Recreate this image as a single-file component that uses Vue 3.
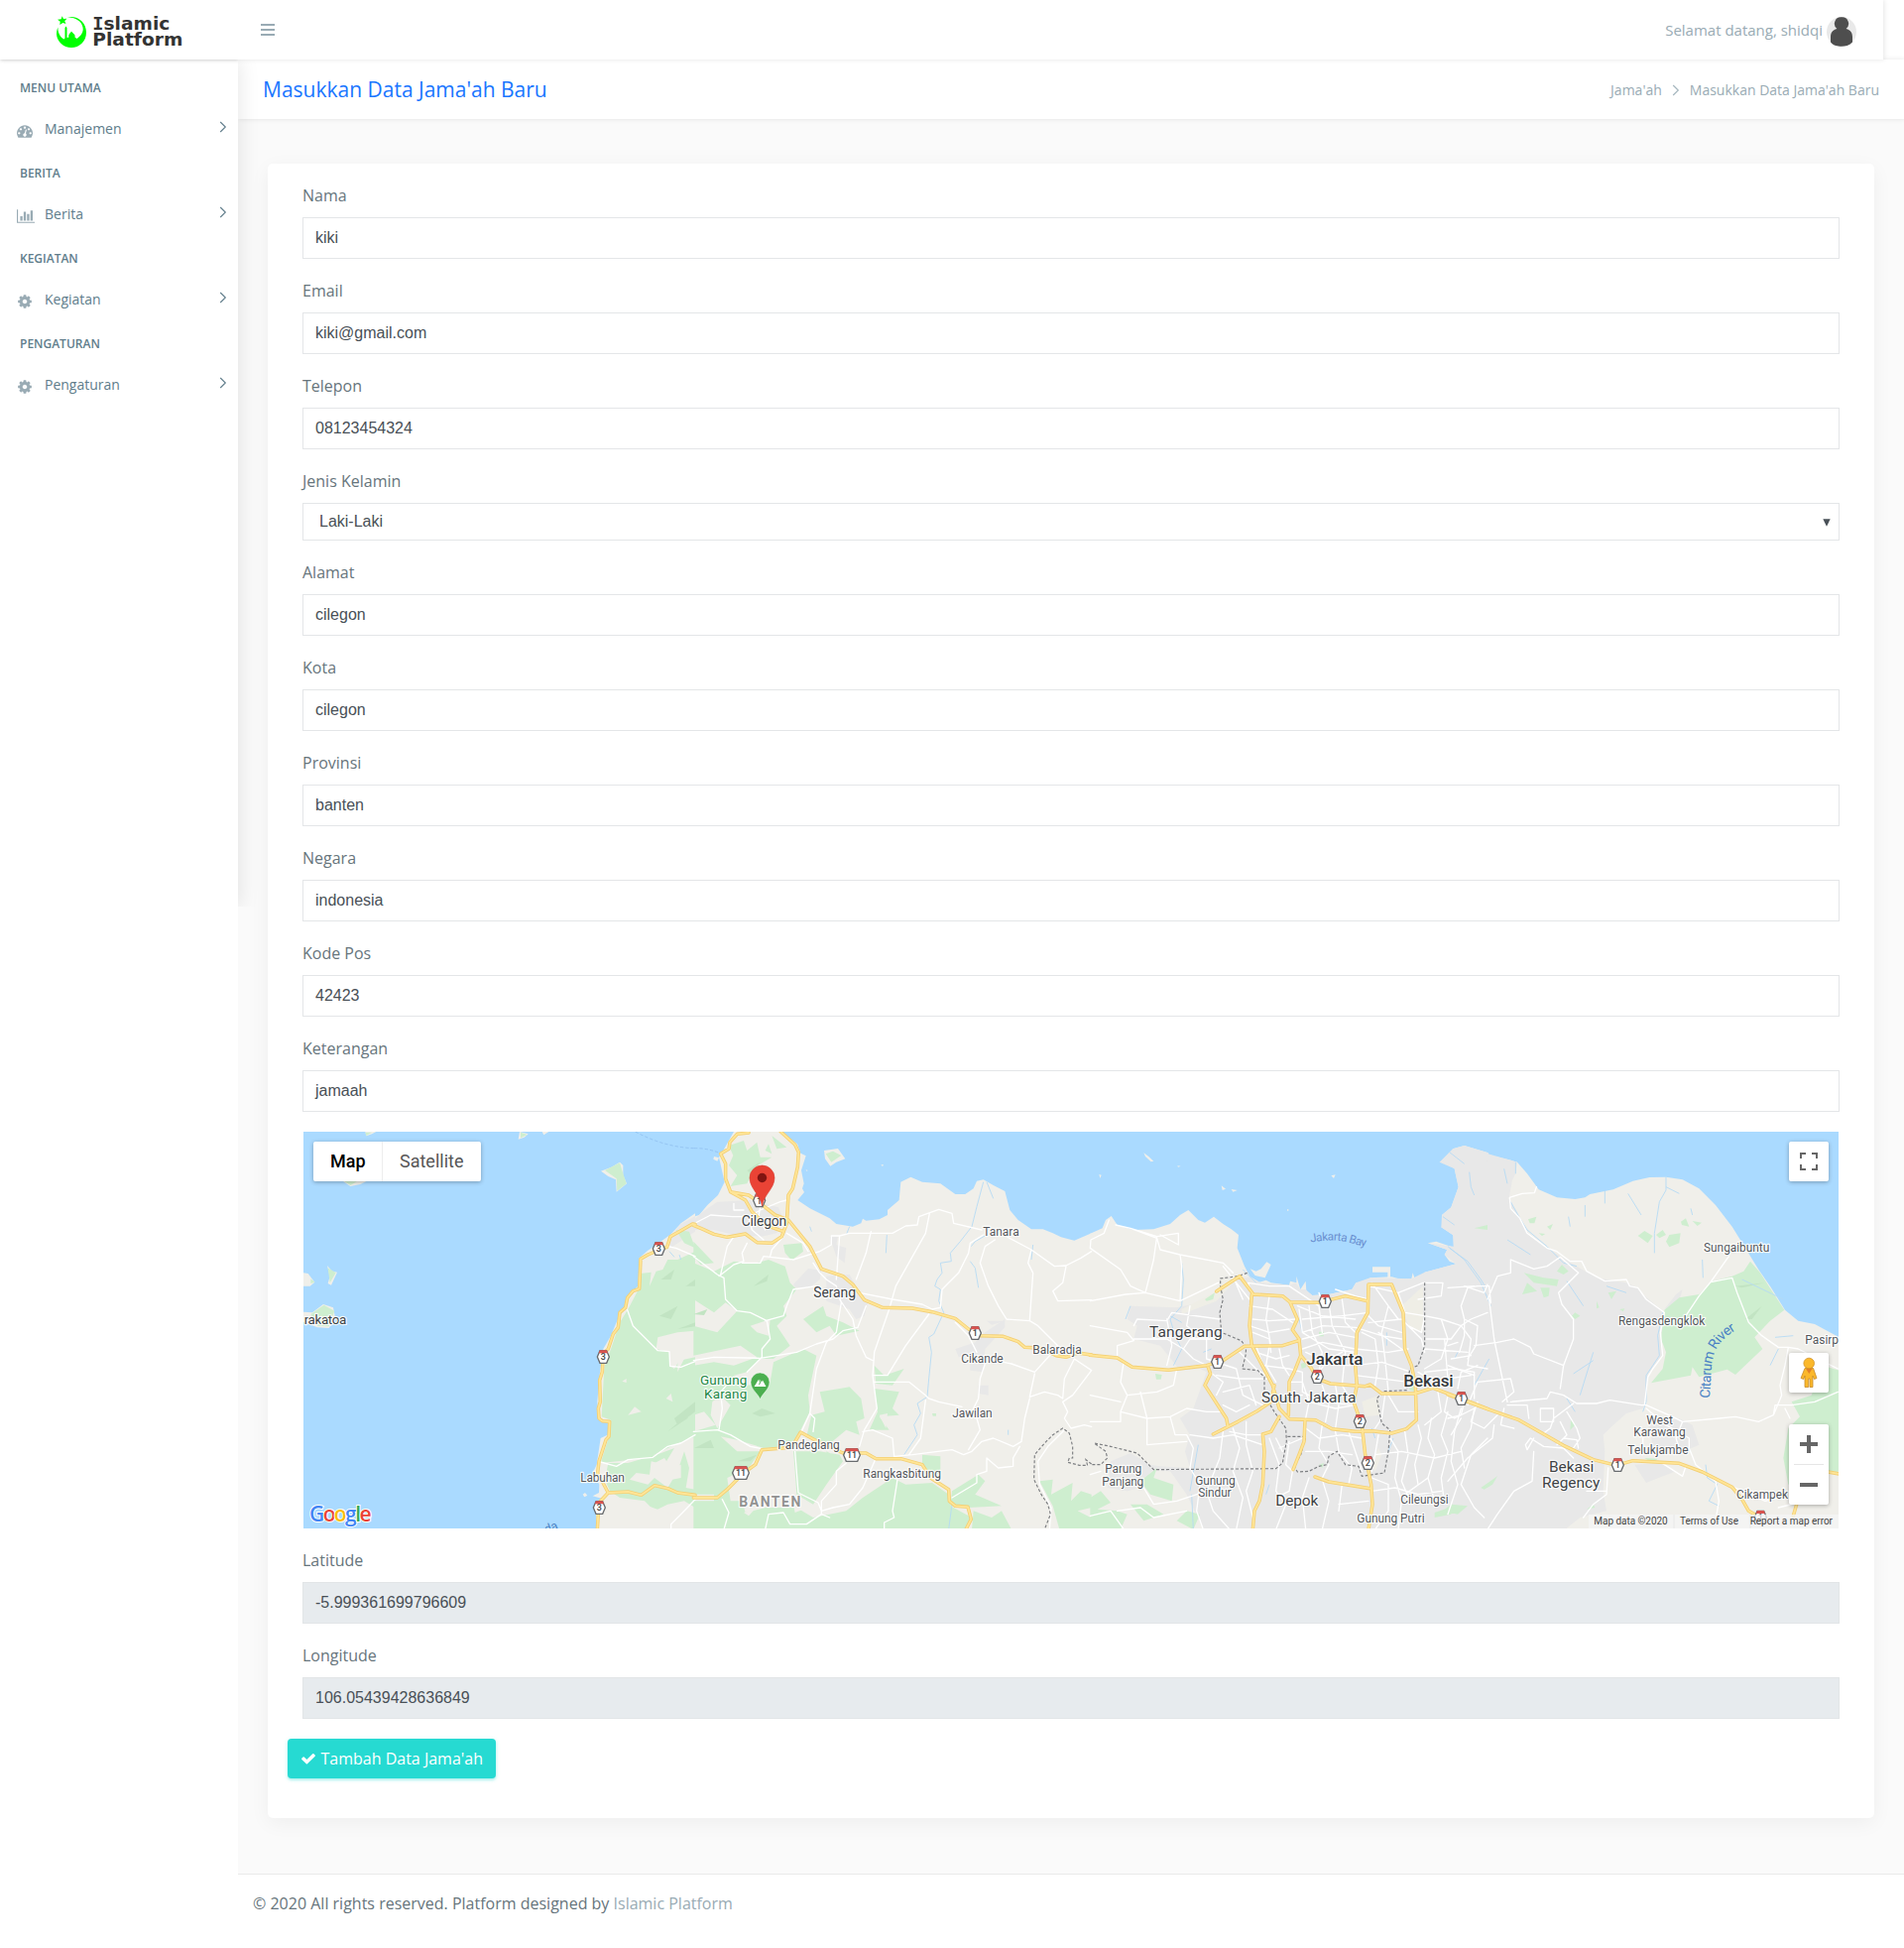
<script setup>
const menu = [
  { title: 'MENU UTAMA', label: 'Manajemen', icon: 'gauge' },
  { title: 'BERITA', label: 'Berita', icon: 'chart' },
  { title: 'KEGIATAN', label: 'Kegiatan', icon: 'cog' },
  { title: 'PENGATURAN', label: 'Pengaturan', icon: 'cog' },
]

const icons = {
  gauge: { w: 1792, d: 'M384 1152q0-53-37.5-90.5t-90.5-37.5-90.5 37.5-37.5 90.5 37.5 90.5 90.5 37.5 90.5-37.5 37.5-90.5zm192-448q0-53-37.5-90.5t-90.5-37.5-90.5 37.5-37.5 90.5 37.5 90.5 90.5 37.5 90.5-37.5 37.5-90.5zm428 481l101-382q6-26-7.5-48.5t-38.5-29.5-48 6.5-30 39.5l-101 382q-60 5-107 43.5t-63 98.5q-20 77 20 146t117 89 146-20 89-117q16-60-6-117t-72-91zm660-33q0-53-37.5-90.5t-90.5-37.5-90.5 37.5-37.5 90.5 37.5 90.5 90.5 37.5 90.5-37.5 37.5-90.5zm-640-640q0-53-37.5-90.5t-90.5-37.5-90.5 37.5-37.5 90.5 37.5 90.5 90.5 37.5 90.5-37.5 37.5-90.5zm448 192q0-53-37.5-90.5t-90.5-37.5-90.5 37.5-37.5 90.5 37.5 90.5 90.5 37.5 90.5-37.5 37.5-90.5zm320 448q0 261-141 483-19 29-54 29h-1402q-35 0-54-29-141-221-141-483 0-182 71-348t191-286 286-191 348-71 348 71 286 191 191 286 71 348z' },
  chart: { w: 2048, d: 'M640 896v512h-256v-512h256zm384-512v1024h-256v-1024h256zm1024 1152v128h-2048v-1536h128v1408h1920zm-640-896v768h-256v-768h256zm384-384v1152h-256v-1152h256z' },
  cog: { w: 1792, d: 'M1152 896q0-106-75-181t-181-75-181 75-75 181 75 181 181 75 181-75 75-181zm512-109v222q0 12-8 23t-20 13l-185 28q-19 54-39 91 35 50 107 138 10 12 10 25t-9 23q-27 37-99 108t-94 71q-12 0-26-9l-138-108q-44 23-91 38-16 136-29 186-7 28-36 28h-222q-14 0-24.5-8.5t-11.5-21.5l-28-184q-49-16-90-37l-141 107q-10 9-25 9-14 0-25-11-126-114-165-168-7-10-7-23 0-12 8-23 15-21 51-66.5t54-70.5q-27-50-41-99l-183-27q-13-2-21-12.5t-8-23.5v-222q0-12 8-23t19-13l186-28q14-46 39-92-40-57-107-138-10-12-10-24 0-10 9-23 26-36 98.5-107.5t94.5-71.5q13 0 26 10l138 107q44-23 91-38 16-136 29-186 7-28 36-28h222q14 0 24.5 8.5t11.5 21.5l28 184q49 16 90 37l142-107q9-9 24-9 13 0 25 10 129 119 165 170 7 8 7 22 0 12-8 23-15 21-51 66.5t-54 70.5q26 50 41 98l183 28q13 2 21 12.5t8 23.5z' },
}

const fields = [
  { label: 'Nama', value: 'kiki' },
  { label: 'Email', value: 'kiki@gmail.com' },
  { label: 'Telepon', value: '08123454324' },
  { label: 'Jenis Kelamin', value: 'Laki-Laki', select: true },
  { label: 'Alamat', value: 'cilegon' },
  { label: 'Kota', value: 'cilegon' },
  { label: 'Provinsi', value: 'banten' },
  { label: 'Negara', value: 'indonesia' },
  { label: 'Kode Pos', value: '42423' },
  { label: 'Keterangan', value: 'jamaah' },
]
const coords = [
  { label: 'Latitude', value: '-5.999361699796609' },
  { label: 'Longitude', value: '106.05439428636849' },
]

// The map is drawn in four tiles; every tile uses units of a third of a pixel.
const W = 300, B = 700, J = 1100, E = 1460
const layers = [
  { name: 'land', paths: [
    [W, 'M1203 280L1160 310 1130 343 1095 368 1060 392 1034 415 1030 500 1000 528 988 570 968 602 948 650 925 690 915 760 907 850 912 905 942 915 938 950 917 960 905 1040 893 1065 913 1100 912 1125 893 1135 920 1142 903 1160 903 1236H1203ZM205 33L238 33 225 40 208 46ZM672 33L698 40 686 50 668 56ZM740 33H760L745 43ZM137 182L160 198 190 192 210 182ZM918 152L950 140 975 125 985 135 985 165 996 190 965 215 963 178 940 168ZM90 438L105 455 120 458 102 497 92 492 98 470ZM18 460L32 462 52 488 38 500 18 500ZM18 578L45 580 78 555 108 565 115 600 95 627 60 625 18 608ZM863 1130L870 1125 877 1133 868 1138Z'],
    [B, 'M-2 290L15 285 40 255 72 225 92 185 75 110 88 90 120 33H262L312 70 322 98 338 106 324 150 332 190 327 205 333 216 313 240 350 265 410 295 430 312 480 320 505 310 510 296 520 302 560 298 585 285 585 270 620 240 625 185 655 170 690 185 745 190 790 222 820 222 845 205 855 182 875 178 905 195 940 213 955 270 980 300 1020 328 1055 328 1085 340 1110 352 1150 362 1202 340V1236H-2ZM393 90L435 84 457 115 430 125 412 137 396 115ZM60 108L75 112 70 122 58 116ZM565 133L573 133 570 138ZM338 148L344 150 340 152Z'],
    [J, 'M-2 341L35 325 45 300 62 288 80 315 130 330 190 328 240 312 270 285 295 270 325 300 345 308 372 290 400 312 425 328 447 345 443 385 465 440 482 472 510 488 530 482 545 490 600 497 603 485 622 490 622 470 634 510 650 485 652 515 670 528 720 525 790 510 802 490 830 495 845 475 910 472 940 480 970 478 974 460 980 478 1005 475 1010 458 1060 445 1105 433 1085 425 1070 405 1078 390 1020 370 1045 365 1097 383 1108 362 1095 345 1060 322 1070 310 1062 285 1090 262 1112 200 1100 145 1080 130 1055 125 1092 100 1095 85 1130 75 1202 97V1236H-2ZM482 448L500 455 515 448 532 427 545 435 527 475 497 468ZM852 442H906V474H898V458H852ZM160 97L175 108 190 122 182 124 165 108ZM262 136L272 137 264 140ZM25 162L32 164 28 174ZM395 196L408 206 398 210ZM425 207L443 210 430 215ZM727 166L740 163 735 174ZM594 268H598V272H594Z'],
    [E, 'M118 99L140 107 185 118 210 125 240 160 275 208 330 232 385 237 415 232 430 222 500 208 560 182 610 171 660 170 710 178 760 205 810 255 860 320 900 385 940 450 975 500 1020 572 1060 605 1110 615 1184 655V1236H118Z'],
  ] },
  { name: 'urban', paths: [
    [W, 'M1203 288L1160 312 1130 345 1120 375 1135 380 1203 335ZM65 585L78 572 75 588Z'],
    [B, 'M-2 300L30 272 70 245 170 240 255 262 270 300 250 340 205 350 120 345 60 330-2 330ZM300 495L345 447 385 452 380 480 350 505 305 505ZM410 350L435 350 430 375 460 385 455 430 430 410ZM400 470L470 465 490 500 525 550 515 590 490 600 470 570 400 545ZM790 690L850 670 880 640 940 600 940 625 880 690 875 760 835 755 835 710 800 715ZM885 605L940 605 900 617ZM860 800L890 800 890 830 860 825Z'],
    [J, 'M390 480L445 478 482 472 510 488 600 497 620 490 634 510 650 510 670 528 720 525 790 510 802 490 845 475 970 478 1010 458 1105 433 1070 405 1078 390 1020 370 1097 380 1095 345 1060 322 1062 285 1090 262 1112 200 1100 145 1055 125 1095 85 1130 75 1202 97V1236H340L290 1130 240 1060 190 1055 175 1070 150 1110 110 1120 50 1110 60 1030 120 1005 180 1040 210 1045 300 1050 285 1000 300 950 270 900 310 870 350 760 330 750 270 755 210 680 130 660 140 620 110 600 120 560 260 565 385 540Z'],
    [E, 'M118 99L185 118 210 125 205 160 195 180 185 235 220 295 250 350 300 385 390 440 450 475 540 490 575 505 590 525 650 575 645 650 650 710 605 765 600 850 590 870 540 885 490 930 470 950 475 1000 470 1120 480 1180 400 1200 355 1236H118ZM565 1040L640 1035 690 1060 600 1095ZM610 920L700 900 740 920 760 980 690 1010 620 990ZM690 525L710 510 700 545 655 570Z'],
  ] },
  { name: 'field-land', paths: [
    [J, 'M395 478L440 480 380 545 275 585 275 570 380 515ZM940 560L1005 500 1005 640 965 630ZM820 850L870 830 875 890 830 895ZM845 1035L870 990 880 1010 860 1060Z'],
    [B, 'M60 940L110 945 80 985 150 1010 90 1030Z'],
  ] },
  { name: 'green', paths: [
    [W, 'M1036 462L1070 458 1065 500 1085 455 1105 450 1120 420 1150 420 1203 395V635L1150 640 1090 655 1085 690 1125 700 1125 740 1140 750 1155 725 1203 715V955L1140 980 1060 1020 917 1035 940 962 948 905 920 895 928 745 950 685 975 610 1000 570 1030 512ZM1145 330L1185 335 1203 385 1170 370ZM940 1035L1000 1035 1100 1005 1140 990 1110 1040 1070 1030 1065 1070 1025 1065 1005 1085 1060 1100 1080 1080 1120 1110 1150 1060 1170 1000 1185 1050 1175 1110 1203 1115V1170L1170 1150 1120 1160 1080 1180 1050 1150 975 1140 945 1120 930 1085ZM140 182L180 184 160 195ZM930 150L975 127 985 160 995 190 967 212 965 175ZM92 445L116 460 98 490ZM205 35H225L208 45ZM675 35L695 42 675 52ZM40 585L80 557 112 575 95 622 60 620ZM40 478L52 488 40 492Z'],
    [B, 'M105 75L150 60 160 90 190 65 200 110 235 110 185 140 160 190 110 198 130 165 105 135 118 105ZM225 70L235 100 215 90ZM235 45L280 80 250 85ZM398 100L420 92 445 105 415 125ZM270 375L325 370 330 395 295 422 275 400ZM-2 365L60 430 20 435-2 410ZM-2 430L60 455 120 425 180 432 225 420 275 440 290 490 310 510 270 560 280 590 250 620 290 680 240 720 200 720 160 760 120 770 160 800 230 790 240 730 330 690 370 710 345 830 350 880 320 940 290 985 210 990 130 965 80 955 130 1000 200 1000 165 1050 100 1080 60 1130-2 1130V940L65 920 30 880-2 890V740L60 730 120 740 190 715 140 680-2 710V620L70 640 130 575 95 550 60 580-2 540ZM380 820L440 810 470 805 505 840 515 900 490 910 500 950 460 935 400 985 340 955 355 890 395 880ZM300 1000L380 1000 440 1010 450 1030 400 1100 360 1160 310 1130 305 1060ZM545 740L575 770 635 750 600 800 550 795ZM545 810L620 820 600 870 620 890 560 895 590 935 530 935 555 880ZM60 1090L100 1080 110 1150 145 1150 155 1185 215 1170 310 1170 360 1200 460 1180 510 1140 600 1080 640 1100 720 1095 770 1130 775 1165 840 1200 820 1236H180L100 1236-2 1236V1150L60 1150ZM690 1010L745 1015 745 1065 710 1080 690 1045ZM780 1120L860 1070 880 1090 850 1130 930 1165 830 1170 775 1165ZM845 1180L900 1200 930 1180 960 1236H840ZM1045 1090L1085 1085 1080 1130 1145 1095 1140 1150 1170 1120 1202 1130V1170L1160 1180 1200 1200V1236H1105L1085 1165ZM330 600L390 560 400 590 450 610 500 635 430 650 410 620 370 640ZM720 885H732V893H722ZM400 1000L440 1020 405 1035Z'],
    [J, 'M-2 1140L30 1120 60 1155 20 1175 80 1180 110 1190 90 1236H-2ZM150 1090L200 1050 190 1080 250 1100 245 1150 180 1130ZM120 1160L170 1160 220 1190 160 1210ZM290 1180L330 1190 310 1236 260 1210ZM345 540L375 520 370 540 350 545ZM690 638H704V652H690ZM635 735L650 730 652 745 638 750ZM195 765L215 768 212 782 198 782ZM960 800L985 800 985 820 965 815ZM690 1040L705 1035 700 1050ZM1040 1185L1100 1165 1090 1190 1040 1200ZM1160 325L1200 315V330ZM1065 1180L1090 1160 1140 1165 1110 1190Z'],
    [E, 'M655 572L700 535 760 525 800 485 860 470 895 455 915 425 945 460 1018 572 975 605 928 655 952 690 870 768 845 752 760 775 740 745 735 770 615 793 650 750 660 700 645 660ZM1134 740L1184 755V1060L1030 1100 1015 1020 1030 930 1065 895 1040 850 1100 830ZM243 298L268 290 262 310 248 310ZM300 320L318 312 310 330ZM275 340L295 342 285 348ZM575 348L595 333 620 348 605 370ZM630 345L650 330 660 345 640 355ZM670 345L704 340 700 370 670 382 660 365ZM705 305L720 295 730 320 708 315ZM740 303L768 308 755 318ZM230 460L290 475 335 480 330 500 260 490ZM240 490L270 515 225 525ZM280 505L308 505 305 530 290 535ZM330 455L345 435 365 455 350 465ZM485 520L510 515 495 540ZM450 545L458 565 450 568ZM375 590L385 580 400 590 385 600ZM520 570L535 568 530 577ZM100 1110L150 1075 135 1100 110 1115ZM420 1175L440 1160 445 1170ZM372 905L385 920 370 935ZM595 1020L635 1022 620 1035Z'],
  ] },
  { name: 'relief', paths: [
    [W, 'M1175 500L1203 480V500ZM1150 630L1203 610V622ZM1140 900L1203 850V880L1150 920ZM1095 590L1150 560 1130 600ZM1120 940L1190 880 1180 900ZM1100 480L1140 450 1130 480Z'],
    [B, 'M160 150L200 125 170 160ZM180 500L225 465 220 485ZM-2 585L40 570 30 588ZM175 885L205 870 245 885 200 895ZM0 990L50 965 60 990ZM130 1030L190 1010 170 1030Z'],
    [E, 'M870 500L960 490 890 505ZM900 600L950 560 920 600Z'],
  ] },
  { name: 'bare', paths: [
    [W, 'M1070 1040L1110 1020 1130 1050 1160 1040 1160 1080 1110 1090ZM1000 890L1020 865 1040 880ZM982 788L995 780 995 792ZM1115 840L1130 825 1135 850ZM1150 700L1185 690 1150 760ZM925 1142L1010 1150 1060 1165 1130 1190 1125 1236H915Z'],
    [B, 'M55 850L80 830 110 860 70 930 50 890ZM170 620L230 600 225 650 190 640ZM150 1185L180 1178 165 1195ZM300 1160L330 1150 330 1175 305 1185ZM560 890L585 885 580 930Z'],
  ] },
  { name: 'stream', paths: [
    [W, 'M1125 395L1140 412M1155 405L1160 420'],
    [B, 'M350 320L355 335M470 320L460 345M583 345L580 400M875 185L855 260 840 320 805 365 775 400 778 425 745 430 750 460 735 480 728 500 745 510 740 545 755 580 725 645 710 655 718 700 710 780 705 835 675 855 685 885 665 920 675 950 655 980 635 1010M885 345L850 365 838 380M835 425L850 445 860 505M1025 375L1020 420M885 185L905 235M950 935V950M780 1160L770 1236'],
    [J, 'M275 430L280 480 275 560 240 600 255 650 275 690 250 740M340 700L365 690M240 590L275 610M460 450L500 490M630 600L640 640M1085 385L1140 425 1180 480 1195 505M1085 95L1130 130M1145 155L1150 200 1160 225M1065 290L1100 315M1110 700L1100 720M300 1120L325 980M305 1130L310 1236M540 1100L530 1130M120 560L105 600M895 640V680M850 930L860 960M915 960L900 1000'],
    [E, 'M0 380L50 420 100 490 130 560M205 125V160M170 145L180 190M475 210V250M545 220L585 285M660 170V210L640 245 625 340 625 400M660 200L700 220M190 245L215 290 240 330 300 380 350 430 390 440M365 290L370 320M415 255V290M735 265L740 285M770 420L772 475M480 500L540 520M360 485L410 560M180 360L250 405M440 700L400 830M380 765L440 725M650 580L635 650 640 710 620 740 600 770 600 850 590 880M1000 690L975 740M990 655L1045 650M780 1040L785 1080 815 1100 790 1150 820 1165M80 800L125 720M890 480L1015 540M360 840L385 880'],
  ] },
  { name: 'minor', paths: [
    [W, 'M998 572L1015 620 1075 680 1090 695 1125 698 1127 742 1160 745 1203 728M917 1032L965 1045 1000 1025 1075 1018 1120 985 1160 975 1203 950M1120 380L1145 385 1203 410M1203 1145L1165 1185 1130 1220V1236'],
    [B, 'M-2 312L50 285 115 290 165 290 200 270 260 245 280 240M120 250V270H150M200 260L195 290 215 330M280 340L330 370 345 395M165 290L175 330 210 360M-2 410L70 465 90 475 95 540 130 575 170 580 220 605 230 660 205 690 205 715 160 760M80 465L100 380 120 350M160 370L145 400 150 425 120 435 75 470M145 430L200 430 210 410 300 420 380 395 415 375 415 348 440 348 430 480M270 350L235 390 230 410M440 348L470 340 600 340 640 318 675 315 680 290 740 268 780 280 785 310 870 330M535 335L520 400 490 480M712 280L700 340 610 500 590 570 545 700 540 770 553 870 515 935 500 985M360 430L380 460 400 480 430 500M370 500L300 510 280 560 270 590 215 605M-2 725L60 715 200 718 310 700 370 675 420 660 450 635 495 625 520 560M430 500L445 550 430 640 400 670 370 750 350 885 325 940M350 885L365 900 360 940M440 540L480 600 490 650 520 715 540 725M500 520L600 540 690 555 720 570 745 565 750 510 800 460 830 400 835 370 875 345M910 360L880 380 865 430 890 500 920 560 945 600 1015 605 1040 620 1100 680M945 350L1020 390 1090 440 1125 438 1170 415 1202 395M1020 390L1010 430 1025 460 1015 605M1125 440L1115 490 1085 515 1100 545 1202 542M790 610L830 650 855 700M850 730L890 720 960 735 1030 760 1080 705M880 735L865 780 860 840 835 890M1030 765L1015 835 1060 820 1100 830 1115 840 1120 780 1150 720 1202 755M1015 840L1000 900 990 970 965 985 905 960 870 970 840 1000 815 1010 780 995 660 1010 605 1015 600 960 540 935 510 940M855 900L865 935 830 995M540 770L585 770 640 680 710 585M545 790H650L700 830 710 840 740 850 810 865M700 845L685 960 650 1010M605 1020L550 1020 510 1110 470 1160 420 1170 385 1180 375 1155 315 1125 305 1000M460 1035L430 1060 430 1100 385 1150 385 1190 410 1200M385 1190L340 1220 290 1220 270 1185 225 1190 215 1236M615 1085L600 1180 605 1200 575 1215V1236M-2 940L70 935 110 950 170 985 205 992M75 935L85 870 80 820 120 775M85 1145L105 1185 90 1236M780 1140L855 1095 855 1070 885 1060 885 1020 920 1050 965 1045 965 1020 985 985M1202 755L1145 830 1115 850 1130 880 1120 900 1140 930 1180 920 1202 925M1120 935L1070 985 1040 1030 1045 1100 1080 1170 1075 1236'],
    [J, 'M-2 385L0 360 40 340 55 300M75 315L120 325 200 350 265 340 265 375 210 345M200 350L190 420 165 520 120 500 90 450-2 385M120 325L200 355 210 390 270 405 400 430 430 460M165 520L105 525-2 545M165 520L270 545 385 490M270 405L275 440 270 545M130 620L140 600 230 605 245 580 390 600M-2 620L110 640 130 665 80 680 80 710M130 660L230 660 280 690 300 660 390 660M230 600L245 680 230 740M280 690L310 720 350 740M100 725L90 790 110 830 90 880 90 910-2 910M90 880L170 900 240 895 290 870 350 880 400 880M110 830L200 820 250 800 260 750M170 900V980L290 970M240 895L255 950 290 950M150 820L170 900M-2 830L90 850M400 440L480 540M430 470L460 540M300 560L290 620 330 650M350 660V720L440 750 460 830 520 860M380 770L450 780 540 780M400 820L480 800 500 860M290 950L310 990 300 1050 330 1100 320 1180 340 1236M400 940L390 1020 350 1120 370 1180 420 1236M430 930L450 990 430 1060 460 1140 440 1236M470 910V980L490 1060 470 1120 490 1200M540 960L570 1040 560 1120 590 1160 560 1236M300 950L370 960 430 950 520 980M-2 1070L30 1060M160 1110L190 1160 260 1150 350 1120M80 1180L150 1170 190 1200 290 1180M-2 1195L60 1180 100 1236'],
    [J, 'M490 530L475 490 540 500 600 500 690 560M480 560L550 570 610 610M490 600L540 605 620 600M540 530L530 600 545 680M500 680L520 740 600 750M630 570L640 640 720 690 800 700M625 560L700 590 800 600M640 600L760 590 840 580M660 560L670 640 700 700 690 760M690 560L700 640M720 550L730 620 770 700 760 800M760 540L770 610 800 640M640 640L700 620 800 625 880 650 940 660M640 660L720 640 800 655M640 690L700 670 800 690M650 700L740 740 800 740M690 760L720 720 760 700M600 750L640 760 640 820 700 850M600 790H640L660 850 650 900M620 750L600 800M700 800L720 860 710 910M740 800L750 860 740 930M700 850L800 860M660 850L740 870 800 860M760 800L790 850M540 680L530 740 560 790M450 700L500 750 530 770M570 690L580 740 600 770M840 590L870 620 940 640M840 610L940 600M850 490L900 560 930 600M820 640L860 660 870 740 860 800M800 690L900 700 960 690M800 740L880 730 970 760M800 770L960 790M900 560L880 640 890 720 900 820M740 510L800 530 840 540M690 520L700 550M840 500L930 520 1005 490M930 520L950 580 1010 590M940 600L1000 660 1010 700M870 640L940 690M960 620L1000 640 1010 590M1005 490L1065 490 1060 530 990 540M1010 590L1060 600 1080 660 1060 720 1010 750M1200 495L1190 520 1130 500M1060 600L1120 620 1150 600 1200 580M1010 660L1090 660 1120 620 1150 660 1140 740 1200 750M1010 690L1140 700M1070 660L1080 780 1150 770M1010 760L1100 750 1160 760 1160 840M1050 820L1060 880 1010 920M1080 830L1070 880 1100 900 1160 870M990 760L1040 790'],
    [J, 'M650 930L690 960 760 950 820 960M700 920L690 990 720 1040 700 1080M740 940L750 1000 790 1050 780 1100M780 940L800 1000 820 1060M660 1080L640 1140 650 1236M700 1085L720 1150 700 1236M760 1100L750 1180M600 970L590 1040 610 1060 600 1120 560 1140M560 960L580 1000M870 950L860 1010 850 1060M900 950L930 1000 920 1080 940 1150M950 940L960 1010 940 1090 970 1160M990 920L1000 960 980 1040 990 1100M1030 900L1020 960 1040 1010 1020 1080 1040 1150M1080 880L1060 950 1080 1000 1060 1080 1070 1160M1120 870L1100 940 1090 1030 1110 1100 1080 1190M1160 870L1150 930 1120 990 1130 1050M1200 960L1150 1010 1120 1100 1160 1170 1190 1200M850 1120L920 1110 990 1130 1060 1120M860 1010L940 1000 1040 1020 1120 1000M900 830L930 880 990 880M890 830L880 900 860 930M750 1160L840 1150M650 1000L720 1000 790 1010M420 940L470 950 520 950M400 860L440 880 480 860M360 760L400 790 380 830M570 830L640 830M480 620L540 640 600 630M500 700L560 720 600 710M490 640L540 660 545 700M640 960L570 990M850 1080L900 1100 900 1180 860 1236M940 1150L930 1236M1020 1080L950 1130'],
    [E, 'M268 200L262 218 225 220 187 232 190 265 218 295 240 340 260 355 300 385 330 395 370 425 405 425 420 455 475 485 540 480 550 500 575 505 600 540 655 580 643 640 650 710 620 750 605 775 595 860M120 540L150 470 190 460 190 420 260 448 300 440 340 412 395 460 335 520 345 555 380 600 380 660 350 740 340 810M130 550L125 500 90 500 60 505 40 560 50 600 50 650 35 700M125 540L140 660 165 780 180 850M80 680L150 670 200 660 250 685 260 705 350 740M50 600L90 620 85 680 60 720M0 505L80 500M0 680L30 670M10 720L70 710M0 740L80 770M30 810L40 760 90 740M60 860L90 790 190 780 200 820 165 850M0 900L40 890 50 850M10 950L40 900M90 850L70 910 110 930 150 890M180 860L240 860 245 900M170 870L160 920 200 930M190 850L300 840 310 820 350 830 390 855 450 855 490 845 585 860 600 860 680 895 710 910 820 900 870 895 940 910 985 890 990 860 1040 860 1110 850 1180 820M280 870H320V910H280ZM380 855L320 900 310 930 290 945M340 910L360 950 330 980M360 880L390 930 400 960 380 990M350 960L390 965 395 990M260 960L240 995 235 980 250 960 290 985 350 990 380 1020M140 920L135 960 60 1020 0 1090M260 1000L255 1090 200 1120 150 1190 120 1236M485 1050L480 1130 440 1160 410 1200M420 1120L480 1120M600 870L660 920 730 960 730 990 750 1040 810 1090 820 1150 810 1210M710 910L690 960 700 990M590 960L590 1010M600 950L680 950M640 1030L710 1075 720 1045M720 590L760 530 795 488 850 410M795 488L860 475 875 520 910 610 950 650 1000 685 1030 685 1020 740 1005 800 1010 830 985 890M1030 685L1060 690 1180 750M1020 870L1035 900M870 1110L960 1150 1000 1140M1000 1170L1060 1155 1110 1060 1150 1060'],
  ] },
]

const highways = [
  [W, 'M1203 313L1195 312 1155 335 1128 350 1118 382 1095 390 1060 405 1038 418 1034 508 1015 515 998 535 992 565 975 580 970 625 955 645 940 690 925 705 922 760 914 785 916 850 910 870 912 900 922 908 944 910 942 955 933 965 912 1030 908 1065 940 1125 912 1155 907 1236M940 1125L1000 1122 1040 1132 1080 1103 1120 1112 1150 1125 1203 1132'],
  [B, 'M165 36L130 40 108 65 105 85 80 100 95 130 95 175 110 215 155 240 175 275 215 315 270 335M262 33L305 72 316 95 313 140 298 205 285 225 280 310 265 350 235 370 190 368 155 342 100 352 60 343 20 325-2 316M110 215L165 225 200 250 245 285 285 300 350 380 385 448 450 470 480 495 515 542 570 565 660 567 720 578 790 598 830 630 865 650 935 652 980 668 1000 685 1050 688 1095 710 1125 715 1160 702 1202 708M-2 1140H70L100 1115 150 1065 185 1040 205 995 295 988 322 942 370 968 450 1005 520 1005 550 1022 625 1022 690 1040 715 1080 770 1115 772 1150 790 1165 828 1168 838 1205 822 1236'],
  [J, 'M-2 709L80 717 125 745 235 754 350 740 400 725 465 682 580 680 628 665M380 516L450 470 492 525 580 530 602 548 690 550 770 530 835 545M487 525L480 620 487 680 550 800 570 870 600 902 680 905 730 932 800 940 850 938 910 945 955 932 985 905 982 800 970 740 950 690 945 580 910 495H840L838 580 805 640 800 740 805 800 795 850 820 920 830 1010 848 1100 852 1160 840 1236M602 548L625 600 610 632 630 660 635 710 665 745 685 780 725 795 830 803 845 798 880 825 980 825 1035 808 1120 840 1202 872M635 710L615 760 600 790 598 890M355 745L362 765 345 800 410 900 415 925M370 948L445 910 500 880 545 850 555 800M570 895L545 940 520 948 525 1000 520 1100 510 1150 495 1180 490 1236M648 905L645 970 630 1010 612 1055M678 1077L720 1092 845 1112'],
  [E, 'M0 828L120 872 215 905 350 982 440 1025 510 1042 560 1028 700 1036 770 1062 860 1108 890 1145 910 1180 945 1200M1055 1160L1045 1195M1150 1062L1184 1068'],
]

const borders = [
  [B, 'M1202 1038L1185 1025 1190 1042 1165 1042 1130 1033 1135 1020 1145 1020 1145 985 1135 945 1115 930 1085 950 1060 975 1030 1010 1028 1085 1050 1130 1070 1160 1078 1190 1060 1236'],
  [J, 'M473 460L445 470 392 477 392 500 400 540 390 580 395 640 455 665 470 685 468 710 458 750 505 755 525 775 525 830 555 880 590 930 592 970 580 1035 560 1052 190 1055 165 1030 140 1005 60 985 10 975 45 1000 50 1020 30 1040-2 1040M1010 490L1010 680 990 740 965 750 955 815 885 818 865 840 880 915 905 935 900 1000 888 1065 820 1075 810 1045 770 1040 745 1000 720 1015 715 1040 690 1045 660 1060 625 1062 615 1045 635 1010 650 955 595 955'],
]

// [tile, left, right, baseline, text, size, class]
const labels = [
  [W, 20, 148, 615, 'rakatoa', 13.5, 'dark'], [W, 856, 990, 1093, 'Labuhan', 12],
  [B, 143, 280, 319, 'Cilegon', 14, 'dark'], [B, 361, 489, 535, 'Serang', 14, 'dark'], [B, 874, 983, 347, 'Tanara', 12],
  [B, 808, 935, 731, 'Cikande', 12], [B, 1024, 1172, 704, 'Balaradja', 12], [B, 781, 902, 898, 'Jawilan', 12],
  [B, 253, 440, 994, 'Pandeglang', 12], [B, 511, 747, 1079, 'Rangkasbitung', 12],
  [B, 18, 160, 798, 'Gunung', 13.5, 'park'], [B, 30, 160, 841, 'Karang', 13.5, 'park'], [B, 136, 322, 1168, 'BANTEN', 14, 'region'],
  [J, 177, 398, 653, 'Tangerang', 15.5, 'dark'], [J, 652, 823, 739, 'Jakarta', 17, 'city'], [J, 946, 1097, 805, 'Bekasi', 17, 'city'],
  [J, 516, 802, 853, 'South Jakarta', 15.5, 'dark'], [J, 559, 688, 1163, 'Depok', 15.5, 'dark'],
  [J, 43, 154, 1066, 'Parung', 12], [J, 34, 160, 1103, 'Panjang', 12], [J, 316, 437, 1102, 'Gunung', 12], [J, 325, 425, 1137, 'Sindur', 12],
  [J, 937, 1082, 1159, 'Cileungsi', 12], [J, 805, 1010, 1216, 'Gunung Putri', 12],
  [E, 774, 973, 397, 'Sungaibuntu', 12], [E, 516, 778, 618, 'Rengasdengklok', 12], [E, 1081, 1182, 675, 'Pasirp', 12],
  [E, 601, 681, 918, 'West', 12], [E, 562, 719, 955, 'Karawang', 12], [E, 544, 728, 1008, 'Telukjambe', 12],
  [E, 306, 442, 1061, 'Bekasi', 15.5, 'dark'], [E, 285, 460, 1109, 'Regency', 15.5, 'dark'], [E, 873, 1029, 1144, 'Cikampek', 12],
]
const credits = [[442, 665, 'Map data ©2020'], [702, 879, 'Terms of Use'], [914, 1164, 'Report a map error']]
const shields = [
  [W, 1093, 387, 3], [W, 925, 714, 3], [W, 913, 1170, 3], [B, 197, 241, 1], [B, 850, 642, 1], [B, 477, 1011, 11], [B, 141, 1065, 11],
  [J, 709, 546, 1], [J, 383, 729, 1], [J, 685, 774, 2], [J, 1121, 840, 1], [J, 814, 909, 2], [J, 838, 1035, 2], [E, 514, 1041, 1], [E, 946, 1199, 1],
]
const tile = (x) => `translate(${x} 1130) scale(.333333)`
const hex = (n) => { const w = n > 9 ? 25 : 18, s = w - 8; return `M${-s}-19H${s}L${w} 0 ${s} 19H${-s}L${-w} 0Z` }
const cap = (n) => { const s = (n > 9 ? 25 : 18) - 8; return `M${-s}-20H${s}L${s + 4}-11H${-s - 4}Z` }
</script>

<template>
  <div class="page">
    <header class="topbar">
      <div class="brand">
        <svg width="134" height="40" viewBox="54 12 134 40">
          <path fill="#0f0" d="M67.500 17.500C77 15 87 21.500 87 32.500 87 42 80 48 72 48 64 48 57.500 42 57 34.500 57 32 57.500 29 58.500 27.500 58 31.500 60 37 64.500 39.500L65.500 38.500V28L66.500 26.500 67.500 28V38L69.500 37.500C68.500 34.500 71 33.500 72 31.500 73 33.500 76.500 34.500 75.500 37.500L77.500 39C82 36 84.500 32 83.500 27.500 82.500 21.500 76 17 67.500 17.500Z" />
          <path fill="#0f0" d="M62.700 16.300L64 19 67.500 18.800 65.200 21.300 66.500 24 63.400 23 60.300 25 60.700 21.800 58 19.800 61.600 19.200Z" />
          <text class="wordmark" x="93.300" y="30.200" textLength="78" lengthAdjust="spacingAndGlyphs"><tspan class="slab">I</tspan>slamic</text>
          <text class="wordmark" x="93.300" y="46.300" textLength="91" lengthAdjust="spacingAndGlyphs">Platform</text>
        </svg>
      </div>
      <nav class="navbar">
        <svg width="14" height="12" viewBox="0 0 14 12"><path d="M0 1h14M0 6h14M0 11h14" stroke="#99abb4" stroke-width="1.800" /></svg>
        <div class="user">
          <span>Selamat datang, shidqi</span>
          <svg width="30" height="30" viewBox="0 0 30 30">
            <circle cx="15" cy="15" r="15" fill="#e9e9e9" />
            <path fill="#4e4e4e" d="M15 .3a6.500 6.500 0 0 1 4.600 11.600C24 13 26 16 26 20v5.500C22.500 29 19 29.800 15 29.800S7 29 4 25.500V20c0-4 2-7 6.400-8.100A6.500 6.500 0 0 1 15 .3Z" />
          </svg>
        </div>
      </nav>
    </header>

    <div class="body">
      <aside class="sidebar">
        <section v-for="m in menu" :key="m.title" class="group">
          <h6>{{ m.title }}</h6>
          <a class="item">
            <span class="ico"><svg :width="icons[m.icon].w / 112" height="16" :viewBox="`0 0 ${icons[m.icon].w} 1792`"><path fill="#99abb4" :d="icons[m.icon].d" /></svg></span>
            <span class="name">{{ m.label }}</span>
            <svg class="chev" width="8" height="12" viewBox="0 0 8 12"><path d="M1.200 1L6.300 6 1.200 11" fill="none" stroke="#607d8b" stroke-width="1.100" /></svg>
          </a>
        </section>
      </aside>

      <main class="content">
        <div class="titlebar">
          <h3>Masukkan Data Jama'ah Baru</h3>
          <div class="crumbs">
            <span>Jama'ah</span>
            <svg width="8" height="12" viewBox="0 0 8 12"><path d="M1.200 1L6.300 6 1.200 11" fill="none" stroke="#a6b7bf" stroke-width="1.200" /></svg>
            <span>Masukkan Data Jama'ah Baru</span>
          </div>
        </div>

        <form class="card">
          <div v-for="f in fields" :key="f.label" class="field">
            <label>{{ f.label }}</label>
            <div :class="['control', { select: f.select }]">
              <span>{{ f.value }}</span>
              <svg v-if="f.select" width="8" height="8" viewBox="0 0 8 8"><path d="M.3.300H7.700L4 7.800Z" fill="#495057" /></svg>
            </div>
          </div>

          <div class="map">
            <svg width="1548" height="400" viewBox="306 1141 1548 400">
              <rect x="306" y="1141" width="1548" height="400" fill="#aadaff" />
              <g v-for="l in layers" :key="l.name" :class="l.name">
                <path v-for="(p, i) in l.paths" :key="i" :transform="tile(p[0])" :d="p[1]" />
              </g>
              <g class="ferry"><path :transform="tile(W)" d="M1022 33Q1110 80 1200 83" /><path :transform="tile(B)" d="M0 83Q40 82 78 98" /></g>
              <g class="borders"><path v-for="(p, i) in borders" :key="i" :transform="tile(p[0])" :d="p[1]" /></g>
              <g class="casing"><path v-for="(p, i) in highways" :key="i" :transform="tile(p[0])" :d="p[1]" /></g>
              <g class="highway"><path v-for="(p, i) in highways" :key="i" :transform="tile(p[0])" :d="p[1]" /></g>

              <g v-for="(s, i) in shields" :key="i" :transform="`translate(${s[0] + s[1] / 3} ${1130 + s[2] / 3}) scale(.333333)`">
                <path :d="hex(s[3])" fill="#fff" stroke="#686b6e" stroke-width="4" />
                <path :d="cap(s[3])" fill="#d9534f" />
                <text class="num" y="10" text-anchor="middle">{{ s[3] }}</text>
              </g>
              <text v-for="(t, i) in labels" :key="i" :class="['label', t[6]]" :x="t[0] + t[1] / 3" :y="1130 + t[3] / 3" :font-size="t[5]" :textLength="(t[2] - t[1]) / 3">{{ t[4] }}</text>
              <g :transform="tile(J)">
                <path id="bay" d="M665 368Q735 355 780 368T834 380" fill="none" />
                <text class="water" font-size="35"><textPath href="#bay" textLength="169">Jakarta Bay</textPath></text>
              </g>
              <g :transform="tile(E)">
                <path id="river" d="M791 840C796 800 795 740 803 715 815 675 835 655 876 630" fill="none" />
                <text class="river" font-size="42"><textPath href="#river" textLength="236">Citarum River</textPath></text>
              </g>
              <text class="river" font-size="12" transform="translate(551 1546) rotate(-22)">da</text>

              <g transform="translate(766.500 1397)">
                <path d="M0 14C-2 8-9.500 4-9.500-3.500A9.500 9.500 0 0 1 9.500-3.500C9.500 4 2 8 0 14Z" fill="#4caf50" stroke="#fff" stroke-width=".5" />
                <path d="M-6 1L-1-7 1.500-3.500 2.500-5.500 6 1Z" fill="#fff" /><path d="M-1-7L0-3-1-1" stroke="#4caf50" fill="none" />
              </g>
              <g transform="translate(768.500 1187.500)">
                <path d="M0 28.500C-1.500 17-12.500 11-12.500 0A12.500 12.500 0 0 1 12.500 0C12.500 11 1.500 17 0 28.500Z" fill="#ea4335" stroke="#d7382c" stroke-width=".6" />
                <circle r="4.700" fill="#811411" />
              </g>

              <text class="google" x="312" y="1533.500" textLength="62.500"><tspan fill="#4285f4">G</tspan><tspan fill="#ea4335">o</tspan><tspan fill="#fbbc04">o</tspan><tspan fill="#4285f4">g</tspan><tspan fill="#34a853">l</tspan><tspan fill="#ea4335">e</tspan></text>
              <rect x="1602" y="1527" width="252" height="14" fill="#f5f5f5" opacity=".75" />
              <path d="M1688 1527v14M1765 1527v14" stroke="#e8e8e8" />
              <text v-for="c in credits" :key="c[2]" class="credit" :x="1460 + c[0] / 3" y="1537.300" :textLength="(c[1] - c[0]) / 3">{{ c[2] }}</text>
            </svg>
            <div class="types"><b>Map</b><span>Satellite</span></div>
            <div class="tool full"><svg width="18" height="18" viewBox="0 0 18 18"><path d="M1 6V1H6M12 1h5V6M17 12v5H12M6 17H1V12" fill="none" stroke="#666" stroke-width="2" /></svg></div>
            <div class="tool peg">
              <svg width="18" height="32" viewBox="0 0 18 32">
                <path d="M5 11.500H13.500L17 21.500 14.500 22.500 13 19V30.500H10V22H8.700V30.500H5V19L3.700 22.500 1 21.500Z" fill="#fbb82b" stroke="#c58a2a" stroke-width=".8" />
                <path d="M5.800 11.500H12.800L9.300 17Z" fill="#e28029" /><circle cx="9.200" cy="6.500" r="5.300" fill="#fbb82b" stroke="#cf9226" stroke-width=".8" />
              </svg>
            </div>
            <div class="zoom">
              <svg width="40" height="81" viewBox="0 0 40 81"><path d="M11 20H29M20 11V29M11 61H29" stroke="#666" stroke-width="4" /><path d="M5 40.500H35" stroke="#e6e6e6" /></svg>
            </div>
          </div>

          <div v-for="f in coords" :key="f.label" class="field">
            <label>{{ f.label }}</label>
            <div class="control readonly"><span>{{ f.value }}</span></div>
          </div>
          <button type="button" class="submit">
            <svg width="16" height="16" viewBox="0 0 1792 1792"><path fill="#fff" d="M1671 566q0 40-28 68l-724 724-136 136q-28 28-68 28t-68-28l-136-136-362-362q-28-28-28-68t28-68l136-136q28-28 68-28t68 28l294 295 656-657q28-28 68-28t68 28l136 136q28 28 28 68z" /></svg>
            <span>Tambah Data Jama'ah</span>
          </button>
        </form>

        <footer class="footer">© 2020 All rights reserved. Platform designed by <a>Islamic Platform</a></footer>
      </main>
    </div>
  </div>
</template>

<style>
body { margin: 0; background: #fff; }
</style>

<style scoped>
.page { width: 1920px; height: 1964px; overflow: hidden; background: #fff; color: #67757c; font: 400 16px/24px "Open Sans", sans-serif; }
.topbar { position: relative; z-index: 3; display: flex; width: 1899px; height: 60px; background: #fff; box-shadow: 1px 0 5px rgba(0, 0, 0, .1); }
.brand { width: 240px; height: 60px; box-sizing: border-box; padding: 12px 0 0 54px; box-shadow: 0 1px 3px rgba(0, 0, 0, .12); clip-path: inset(0 0 -6px 0); }
.brand svg, .navbar svg { display: block; }
.wordmark { font: 700 17.5px "DejaVu Sans", sans-serif; fill: #333; }
.slab { font-family: "DejaVu Sans Mono", monospace; }
.navbar { flex: 1; display: flex; justify-content: space-between; align-items: center; padding: 0 27px 0 23px; }
.user { display: flex; align-items: center; gap: 4px; color: #99abb4; font-size: 15px; padding-top: 4px; }
.user span { margin-top: -4px; }

.body { display: flex; align-items: flex-start; height: 1904px; }
.sidebar { position: relative; z-index: 2; width: 240px; height: 854px; background: #fff; box-shadow: 1px 0 20px rgba(0, 0, 0, .1); clip-path: inset(0 -30px 0 0); box-sizing: border-box; padding-top: 15px; }
.group { height: 86px; }
.group h6 { margin: 0; padding: 2px 0 0 20px; height: 33px; box-sizing: border-box; font-size: 12px; line-height: 24px; font-weight: 600; color: #607d8b; }
.item { display: flex; align-items: flex-start; height: 40px; color: #607d8b; font-size: 14px; line-height: 24px; }
.ico { display: block; flex: none; width: 28px; padding: 15.500px 0 0 17px; }
.ico svg { display: block; }
.name { width: 176px; margin-top: 10px; }
.chev { margin-top: 14px; }

.content { flex: 1; background: #fafafa; }
.titlebar { display: flex; justify-content: space-between; align-items: center; height: 60px; box-sizing: border-box; padding: 0 25px; background: #fff; box-shadow: 1px 0 5px rgba(0, 0, 0, .1); }
h3 { margin: 0; font-size: 21px; line-height: 30px; font-weight: 400; color: #1976ff; }
.crumbs { display: flex; align-items: center; padding-top: 2px; font-size: 14px; color: #99abb4; gap: 10px; }

.card { margin: 45px 30px 56px; padding: 20px 35px 40px; height: 1668px; box-sizing: border-box; background: #fff; border-radius: 5px; box-shadow: 0 5px 20px rgba(0, 0, 0, .05); }
.field { margin-bottom: 20px; }
.field label { display: block; margin-bottom: 10px; line-height: 24px; }
.control { display: flex; align-items: center; justify-content: space-between; height: 42px; box-sizing: border-box; border: 1px solid #e4e6e8; padding: 0 8px 0 12px; background: #fff; color: #495057; font-family: "Liberation Sans", Arial, sans-serif; }
.select { height: 38px; padding-left: 16px; }
.select svg { margin-top: 2px; }
.readonly { background: #e7ebee; border-color: #e2e5e7; }

.map { position: relative; margin: 0 1px 20px; height: 400px; overflow: hidden; }
.map > svg { display: block; }
.land, .bare { fill: #f0efea; }
.urban { fill: #e8e8e8; }
.field-land { fill: #efeee6; }
.green { fill: #ceeecf; }
.relief { fill: #c2e4c3; }
.stream { fill: none; stroke: #b4daf5; stroke-width: 2.6; stroke-linejoin: round; }
.minor { fill: none; stroke: #fff; stroke-width: 4; stroke-linejoin: round; stroke-linecap: round; }
.ferry { fill: none; stroke: #8bb9ec; stroke-width: 2; stroke-dasharray: 10 6; }
.borders { fill: none; stroke: #7d7f82; stroke-width: 3.5; stroke-dasharray: 9 6; }
.casing { fill: none; stroke: #f3cf74; stroke-width: 10.5; stroke-linejoin: round; stroke-linecap: round; }
.highway { fill: none; stroke: #ffe596; stroke-width: 5.5; stroke-linejoin: round; stroke-linecap: round; }
.map text { font-family: Roboto, sans-serif; }
.label { fill: #54575b; stroke: #fff; stroke-width: 2.4px; stroke-opacity: .85; stroke-linejoin: round; paint-order: stroke; }
.label.dark { fill: #404346; }
.label.city { fill: #35383b; font-weight: 500; }
.label.park { fill: #1f8746; }
.label.region { fill: #929292; font-weight: 700; }
.water { fill: #6a90d0; }
.river { fill: #4a82c4; }
.num { font-size: 27px; fill: #444; font-weight: 500; }
.map .google { font: 600 21px "Open Sans", sans-serif; stroke: #fff; stroke-width: 2px; paint-order: stroke; }
.credit { font-size: 10px; fill: #444; }
.types, .tool, .zoom { position: absolute; background: #fff; border-radius: 2px; box-shadow: 0 1px 4px rgba(0, 0, 0, .3); }
.types { left: 10px; top: 10px; display: flex; height: 40px; width: 169px; box-sizing: border-box; font: 18px/40px Roboto, sans-serif; color: #565656; }
.types b { width: 52px; border-right: 1px solid #eee; padding-left: 17px; font-weight: 500; color: #000; }
.types span { padding-left: 17px; }
.tool { right: 10px; width: 40px; height: 40px; display: flex; align-items: center; justify-content: center; }
.full { top: 10px; }
.peg { top: 223px; }
.zoom { right: 10px; top: 295px; width: 40px; height: 81px; }

.submit { display: flex; align-items: center; gap: 4.500px; width: 210px; height: 40px; margin-left: -15px; padding: 0 13px; border: 0; border-radius: 4px; background: #26dad2; color: #fff; font: 400 16px/24px "Open Sans", sans-serif; white-space: nowrap; box-shadow: 0 2px 2px rgba(38, 218, 210, .2), 0 1px 4px rgba(38, 218, 210, .3); }
.footer { height: 75px; box-sizing: border-box; border-top: 1px solid #eaeaea; padding: 17px 15px; background: #fff; line-height: 24px; }
.footer a { color: #99abb4; }
</style>
